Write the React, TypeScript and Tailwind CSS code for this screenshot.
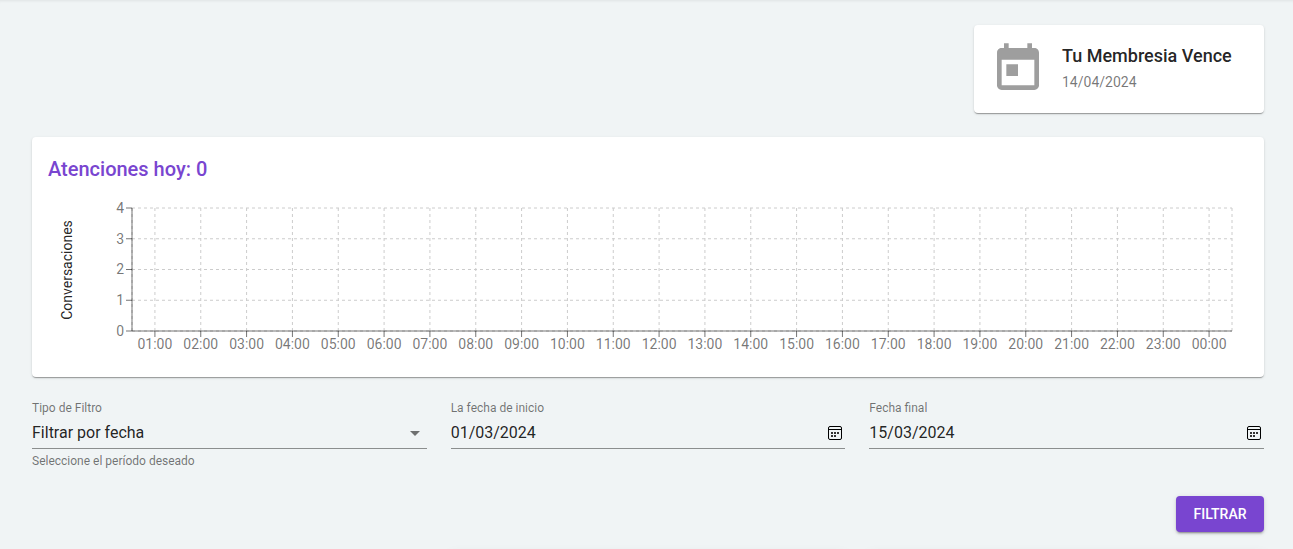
import { useLayoutEffect, useRef, useState } from "react";
import type { ReactNode } from "react";

const hours = Array.from({ length: 24 }, (_, i) => `${String((i + 1) % 24).padStart(2, "0")}:00`);
const counts = [0, 1, 2, 3, 4];

const paper =
  "rounded bg-white shadow-[0_2px_1px_-1px_rgba(0,0,0,0.2),0_1px_1px_0_rgba(0,0,0,0.14),0_1px_3px_0_rgba(0,0,0,0.12)]";

function HourlyChart() {
  const box = useRef<HTMLDivElement>(null);
  const [width, setWidth] = useState(1200);

  useLayoutEffect(() => {
    const el = box.current;
    if (!el) return;
    const measure = () => setWidth(el.clientWidth);
    measure();
    const observer = new ResizeObserver(measure);
    observer.observe(el);
    return () => observer.disconnect();
  }, []);

  const left = 84;
  const right = width - 16;
  const top = 16;
  const bottom = 139;
  const band = (right - left) / hours.length;
  const xs = hours.map((_, i) => left + band * (i + 0.5));
  const ys = counts.map((n) => bottom - ((bottom - top) * n) / 4);

  return (
    <div ref={box} className="h-[169px] w-full">
      <svg width={width} height={169} className="block text-sm" role="img" aria-label="Conversaciones por hora">
        <g stroke="#ccc" strokeDasharray="3 3">
          {ys.map((y) => (
            <line key={y} x1={left} x2={right} y1={y} y2={y} />
          ))}
          {[left, ...xs, right].map((x) => (
            <line key={x} x1={x} x2={x} y1={top} y2={bottom} />
          ))}
        </g>
        <g stroke="rgba(0,0,0,0.54)">
          <line x1={left} x2={right} y1={bottom} y2={bottom} />
          <line x1={left} x2={left} y1={top} y2={bottom} />
          {xs.map((x) => (
            <line key={x} x1={x} x2={x} y1={bottom} y2={bottom + 6} />
          ))}
          {ys.map((y) => (
            <line key={y} x1={left - 6} x2={left} y1={y} y2={y} />
          ))}
        </g>
        <g fill="rgba(0,0,0,0.54)">
          {hours.map((h, i) => (
            <text key={h} x={xs[i]} y={bottom + 8} dy="0.71em" textAnchor="middle">
              {h}
            </text>
          ))}
          {counts.map((n, i) => (
            <text key={n} x={left - 8} y={ys[i]} dy="0.355em" textAnchor="end">
              {n}
            </text>
          ))}
        </g>
        <text transform="translate(24 78) rotate(-90)" textAnchor="middle" fill="rgba(0,0,0,0.87)">
          Conversaciones
        </text>
      </svg>
    </div>
  );
}

function CalendarIcon() {
  return (
    <svg viewBox="0 0 16 16" className="size-4" fill="none" aria-hidden="true">
      <rect x="1.5" y="1.5" width="13" height="13" rx="1.5" stroke="#000" />
      <path d="M2 4.5h12" stroke="#000" />
      <path d="M4 7h2v2H4zM7 7h2v2H7zM10 7h2v2h-2zM4 10h2v2H4zM7 10h2v2H7z" fill="#333" />
    </svg>
  );
}

function Field({ id, label, children }: { id: string; label: string; children: ReactNode }) {
  return (
    <div className="min-w-0">
      <label htmlFor={id} className="block h-4 text-xs/4 text-black/54">
        {label}
      </label>
      <div className="relative flex h-[33px] items-center border-b border-black/42 pt-0.5">{children}</div>
    </div>
  );
}

function DateField({ id, label, value }: { id: string; label: string; value: string }) {
  return (
    <Field id={id} label={label}>
      <input id={id} type="text" defaultValue={value} className="min-w-0 flex-1 bg-transparent text-base outline-none" />
      <button type="button" aria-label={`Abrir calendario: ${label}`} className="mr-0.5">
        <CalendarIcon />
      </button>
    </Field>
  );
}

export default function App() {
  return (
    <main className="h-screen overflow-hidden bg-[#f0f4f5] pt-[25px] pr-[29px] pl-8 font-[Roboto,sans-serif] text-black/87 shadow-[inset_0_3px_3px_-2px_rgba(0,0,0,0.07)]">
      <div className="flex justify-end">
        <section className={`${paper} flex h-[88px] w-[290px] items-center gap-4 px-4`}>
          <svg viewBox="0 0 24 24" className="size-14 shrink-0 fill-[#9e9e9e]" aria-hidden="true">
            <path d="M19 3h-1V1h-2v2H8V1H6v2H5c-1.11 0-1.99.9-1.99 2L3 19c0 1.1.89 2 2 2h14c1.1 0 2-.9 2-2V5c0-1.100-.9-2-2-2zm0 16H5V8h14v11zM7 10h5v5H7z" />
          </svg>
          <div className="pb-1.5">
            <h2 className="text-lg/8 font-medium whitespace-nowrap">Tu Membresia Vence</h2>
            <p className="text-sm/5 text-black/54">14/04/2024</p>
          </div>
        </section>
      </div>

      <section className={`${paper} mt-6 p-4`}>
        <h2 className="mb-[7px] text-xl/8 font-medium text-[#7945d0]">Atenciones hoy: 0</h2>
        <HourlyChart />
      </section>

      <form onSubmit={(e) => e.preventDefault()}>
        <div className="mt-[23px] grid grid-cols-3 gap-6">
          <div>
            <Field id="filtro" label="Tipo de Filtro">
              <select id="filtro" className="h-full w-full appearance-none bg-transparent pr-6 text-base outline-none">
                <option>Filtrar por fecha</option>
              </select>
              <svg viewBox="0 0 24 24" className="pointer-events-none absolute right-0 size-6 fill-black/54" aria-hidden="true">
                <path d="M7 10l5 5 5-5z" />
              </svg>
            </Field>
            <p className="mt-1 text-xs/4 text-black/54">Seleccione el período deseado</p>
          </div>
          <DateField id="inicio" label="La fecha de inicio" value="01/03/2024" />
          <DateField id="final" label="Fecha final" value="15/03/2024" />
        </div>
        <div className="mt-[27px] flex justify-end">
          <button
            type="submit"
            className="h-9 w-[88px] rounded bg-[#7945d0] text-sm font-medium text-white shadow-[0_3px_1px_-2px_rgba(0,0,0,0.2),0_2px_2px_0_rgba(0,0,0,0.14),0_1px_5px_0_rgba(0,0,0,0.12)]"
          >
            FILTRAR
          </button>
        </div>
      </form>

      <div className="mt-6 grid grid-cols-3 gap-6">
        <div className="col-start-2 h-28 rounded bg-white shadow-[0_3px_14px_2px_rgba(0,0,0,0.12)]" />
        <div className="h-28 rounded bg-white shadow-[0_3px_14px_2px_rgba(0,0,0,0.12)]" />
      </div>
    </main>
  );
}
